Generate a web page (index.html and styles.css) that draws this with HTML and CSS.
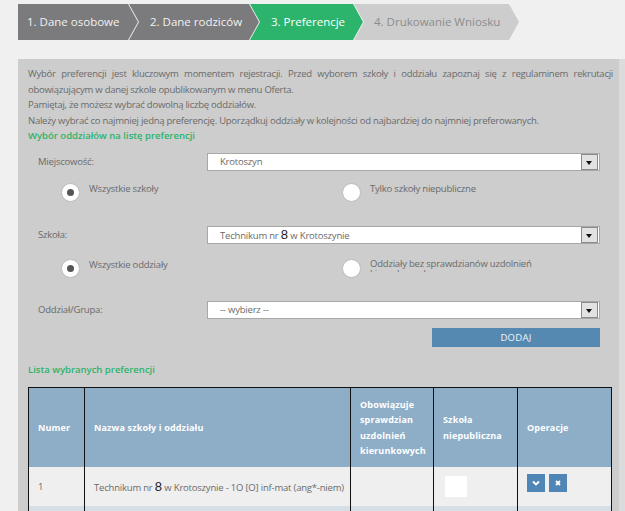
FILE: index.html
```html
<!DOCTYPE html>
<html lang="pl">
<head>
<meta charset="utf-8">
<title>Preferencje</title>
<link rel="stylesheet" href="styles.css">
</head>
<body>
<div class="page">
  <nav class="steps">
    <div class="step step-1 done">1. Dane osobowe</div>
    <div class="step step-2 done">2. Dane rodziców</div>
    <div class="step step-3 active">3. Preferencje</div>
    <div class="step step-4">4. Drukowanie Wniosku</div>
  </nav>

  <section class="panel">
    <p class="intro justify">Wybór preferencji jest kluczowym momentem rejestracji. Przed wyborem szkoły i oddziału zapoznaj się z regulaminem rekrutacji obowiązującym w danej szkole opublikowanym w menu Oferta.</p>
    <p class="intro">Pamiętaj, że możesz wybrać dowolną liczbę oddziałów.</p>
    <p class="intro">Należy wybrać co najmniej jedną preferencję. Uporządkuj oddziały w kolejności od najbardziej do najmniej preferowanych.</p>
    <h3 class="section-title">Wybór oddziałów na listę preferencji</h3>

    <div class="field-row row-city">
      <label class="field-label">Miejscowość:</label>
      <div class="select"><span class="select-text">Krotoszyn</span><span class="select-btn"></span></div>
    </div>

    <div class="radio-row row-r1">
      <div class="radio-opt"><span class="radio checked"></span><span class="radio-text">Wszystkie szkoły</span></div>
      <div class="radio-opt"><span class="radio"></span><span class="radio-text">Tylko szkoły niepubliczne</span></div>
    </div>

    <div class="field-row row-school">
      <label class="field-label">Szkoła:</label>
      <div class="select"><span class="select-text">Technikum nr <span class="big8">8</span> w Krotoszynie</span><span class="select-btn"></span></div>
    </div>

    <div class="radio-row row-r2">
      <div class="radio-opt"><span class="radio checked"></span><span class="radio-text">Wszystkie oddziały</span></div>
      <div class="radio-opt"><span class="radio"></span><span class="radio-text clipped">Oddziały bez sprawdzianów uzdolnień kierunkowych</span></div>
    </div>

    <div class="field-row row-group">
      <label class="field-label">Oddział/Grupa:</label>
      <div class="select"><span class="select-text">-- wybierz --</span><span class="select-btn"></span></div>
    </div>

    <div class="add-row"><button class="btn-add">DODAJ</button></div>

    <h3 class="section-title list-title">Lista wybranych preferencji</h3>

    <table class="pref-table">
      <colgroup>
        <col class="c1"><col class="c2"><col class="c3"><col class="c4"><col class="c5">
      </colgroup>
      <thead>
        <tr>
          <th>Numer</th>
          <th>Nazwa szkoły i oddziału</th>
          <th>Obowiązuje sprawdzian uzdolnień kierunkowych</th>
          <th>Szkoła niepubliczna</th>
          <th>Operacje</th>
        </tr>
      </thead>
      <tbody>
        <tr class="r-odd">
          <td>1</td>
          <td>Technikum nr <span class="big8">8</span> w Krotoszynie - 1O [O] inf-mat (ang*-niem)</td>
          <td></td>
          <td><span class="check-box"></span></td>
          <td class="ops">
            <span class="op-btn"><svg width="10" height="10" viewBox="0 0 10 10"><path d="M2 3.5 L5 6.5 L8 3.5" fill="none" stroke="#fff" stroke-width="1.8"/></svg></span>
            <span class="op-btn"><svg width="10" height="10" viewBox="0 0 10 10"><path d="M3 3 L7 7 M7 3 L3 7" fill="none" stroke="#fff" stroke-width="1.8"/></svg></span>
          </td>
        </tr>
        <tr class="r-even">
          <td></td>
          <td></td>
          <td></td>
          <td></td>
          <td class="ops">
            <span class="op-btn"><svg width="10" height="10" viewBox="0 0 10 10"><path d="M2 6.5 L5 3.5 L8 6.5" fill="none" stroke="#fff" stroke-width="1.8"/></svg></span>
            <span class="op-btn"><svg width="10" height="10" viewBox="0 0 10 10"><path d="M3 3 L7 7 M7 3 L3 7" fill="none" stroke="#fff" stroke-width="1.8"/></svg></span>
          </td>
        </tr>
      </tbody>
    </table>
  </section>
</div>
</body>
</html>
```

FILE: styles.css
```css
* { box-sizing: border-box; }
html, body { margin: 0; padding: 0; }
body {
  background: #f0f0f0;
  font-family: "Open Sans", "DejaVu Sans", sans-serif;
  color: #666;
  overflow: hidden;
}
.page {
  padding: 4px 0 0 18px;
}

/* steps */
.steps {
  display: flex;
  height: 36px;
}
.step {
  height: 36px;
  line-height: 36px;
  font-size: 11.5px;
  white-space: nowrap;
  color: #f2f2f2;
  padding-left: 21px;
  clip-path: polygon(0 0, calc(100% - 10px) 0, 100% 50%, calc(100% - 10px) 100%, 0 100%, 10px 50%);
  margin-left: -9px;
}
.step.done { background: #7b7a7c; }
.step.active { background: #2db46c; color: #fff; }
.step-1 {
  width: 120px;
  padding-left: 9px;
  margin-left: 0;
  clip-path: polygon(0 0, calc(100% - 10px) 0, 100% 50%, calc(100% - 10px) 100%, 0 100%);
}
.step-2 { width: 130px; }
.step-3 { width: 113px; }
.step-4 { width: 165px; background: #cdcdcd; color: #8c8c8c; padding-left: 20px; }

/* panel */
.panel {
  margin-top: 19px;
  background: #cdcdcd;
  border-right: 6px solid #dcdcdc;
  padding: 7px 6px 0 10px;
  min-height: 460px;
}
.intro {
  margin: 0;
  font-size: 9.5px;
  line-height: 15.7px;
  color: #6a6a6a;
  letter-spacing: -0.25px;
}
.justify { text-align: justify; }
.section-title {
  margin: 0;
  font-size: 9.5px;
  line-height: 14px;
  font-weight: 600;
  color: #2cb36a;
}

.field-row {
  display: flex;
  align-items: center;
  height: 18px;
  padding-left: 10px;
}
.field-label {
  width: 169px;
  font-size: 9.5px;
  color: #6a6a6a;
  letter-spacing: -0.2px;
}
.select {
  width: 393px;
  height: 18px;
  background: #fff;
  border: 1px solid #a8a8a8;
  display: flex;
  align-items: center;
  justify-content: space-between;
  padding-left: 12px;
}
.select-text {
  font-size: 9.5px;
  color: #6a6a6a;
  letter-spacing: -0.2px;
}
.big8 {
  font-family: "Liberation Sans", sans-serif;
  font-size: 13px;
  color: #222;
  letter-spacing: 0;
  line-height: 1;
}
.select-btn {
  width: 17px;
  height: 16px;
  background: #e2e2e2;
  border: 1px solid #8a8a8a;
  margin-right: 1px;
  position: relative;
}
.select-btn::after {
  content: "";
  position: absolute;
  left: 4px;
  top: 6px;
  border-left: 3.5px solid transparent;
  border-right: 3.5px solid transparent;
  border-top: 4px solid #111;
}

.row-city { margin-top: 10px; }
.row-school { margin-top: 24px; }
.row-group { margin-top: 23px; }

.radio-row {
  display: grid;
  grid-template-columns: 281px 1fr;
  padding-left: 33px;
  height: 19px;
}
.row-r1 { margin-top: 12px; }
.row-r2 { margin-top: 15px; }
.radio-opt {
  display: flex;
  align-items: flex-start;
}
.radio {
  width: 19px;
  height: 19px;
  border-radius: 50%;
  background: #fff;
  border: 1px solid #bdbdbd;
  position: relative;
  flex: none;
}
.radio.checked::after {
  content: "";
  position: absolute;
  left: 5px;
  top: 5px;
  width: 7px;
  height: 7px;
  border-radius: 50%;
  background: #555;
}
.radio-text {
  margin-left: 9px;
  font-size: 9.5px;
  line-height: 12px;
  color: #6a6a6a;
  letter-spacing: -0.2px;
  margin-top: 0;
}
.radio-text.clipped {
  width: 200px;
  height: 13px;
  overflow: hidden;
  line-height: 10.5px;
}

.add-row {
  display: flex;
  justify-content: flex-end;
  padding-right: 13px;
  margin-top: 9px;
}
.btn-add {
  width: 168px;
  height: 19px;
  background: #5589b1;
  border: none;
  color: #f2f6fa;
  font-family: "Open Sans", sans-serif;
  font-size: 9.5px;
  letter-spacing: 0.3px;
  padding: 0;
}
.list-title { margin-top: 16px; }

/* table */
.pref-table {
  margin-top: 10px;
  width: 583px;
  border-collapse: collapse;
  table-layout: fixed;
  border: 1px solid #111;
}
.c1 { width: 56px; }
.c2 { width: 266px; }
.c3 { width: 83px; }
.c4 { width: 84px; }
.c5 { width: 94px; }
.pref-table th, .pref-table td {
  border-left: 1px solid #111;
  border-right: 1px solid #111;
  text-align: left;
  vertical-align: middle;
  padding: 0 0 0 9px;
}
.pref-table th {
  background: #8eaec8;
  color: #fff;
  height: 80px;
  font-size: 9px;
  font-weight: 700;
  letter-spacing: 0.15px;
  line-height: 15.3px;
  padding-right: 1px;
}
.pref-table td {
  font-size: 9.5px;
  color: #6a6a6a;
  letter-spacing: -0.2px;
  height: 39px;
}
.r-odd td { background: #efefef; }
.r-even td { background: #d6dee6; }
.check-box {
  display: block;
  width: 22px;
  height: 21px;
  background: #fff;
  margin-left: 2px;
}
.ops { white-space: nowrap; }
.op-btn {
  display: inline-flex;
  align-items: center;
  justify-content: center;
  width: 18px;
  height: 18px;
  background: #4f86b5;
  margin-right: 1px;
  vertical-align: middle;
  position: relative;
  top: -4px;
}
.op-btn + .op-btn { margin-left: 1px; }
```
